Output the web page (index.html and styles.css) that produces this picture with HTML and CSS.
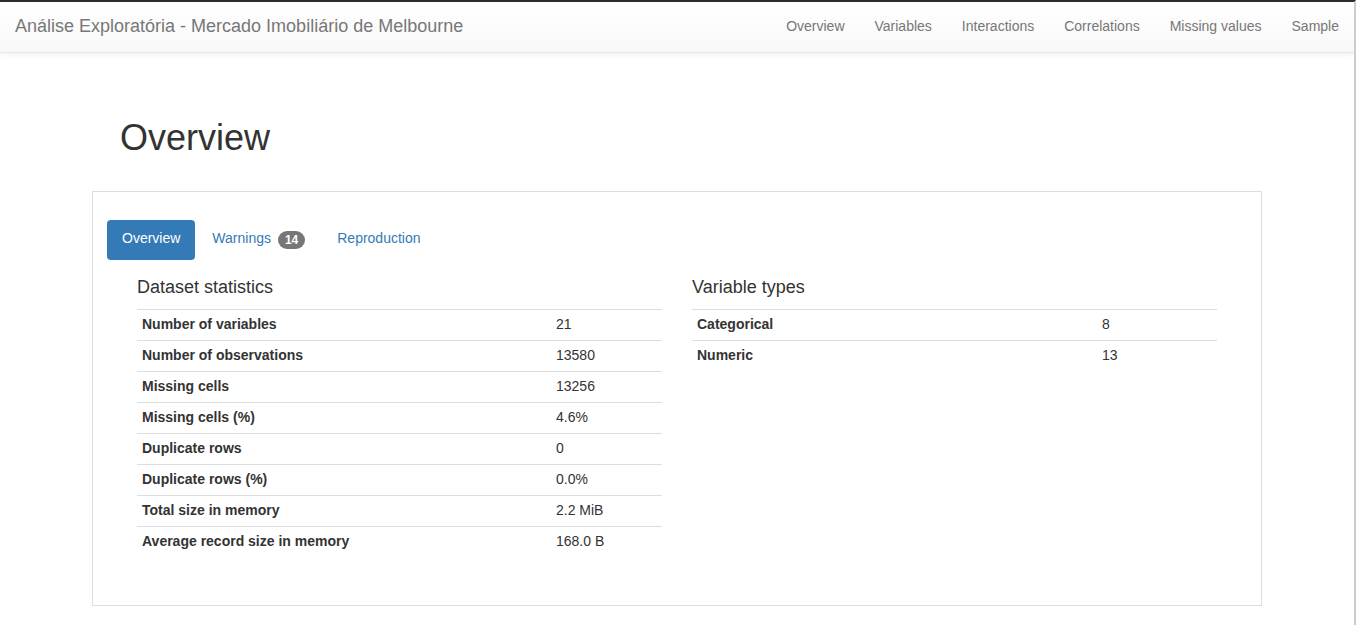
FILE: index.html
```html
<!DOCTYPE html>
<html lang="pt">
<head>
<meta charset="utf-8">
<title>Análise Exploratória - Mercado Imobiliário de Melbourne</title>
<link rel="stylesheet" href="styles.css">
</head>
<body>
<nav class="navbar">
  <a class="brand" href="#">Análise Exploratória - Mercado Imobiliário de Melbourne</a>
  <ul class="nav-links">
    <li><a href="#">Overview</a></li>
    <li><a href="#">Variables</a></li>
    <li><a href="#">Interactions</a></li>
    <li><a href="#">Correlations</a></li>
    <li><a href="#">Missing values</a></li>
    <li><a href="#">Sample</a></li>
  </ul>
</nav>
<main class="container">
  <h1 class="page-title">Overview</h1>
  <section class="panel">
    <ul class="pills">
      <li class="active"><a href="#">Overview</a></li>
      <li><a href="#">Warnings <span class="badge">14</span></a></li>
      <li><a href="#">Reproduction</a></li>
    </ul>
    <div class="tab-content">
      <div class="col">
        <p class="heading">Dataset statistics</p>
        <table class="stats stats-left">
          <tbody>
            <tr><th>Number of variables</th><td>21</td></tr>
            <tr><th>Number of observations</th><td>13580</td></tr>
            <tr><th>Missing cells</th><td>13256</td></tr>
            <tr><th>Missing cells (%)</th><td>4.6%</td></tr>
            <tr><th>Duplicate rows</th><td>0</td></tr>
            <tr><th>Duplicate rows (%)</th><td>0.0%</td></tr>
            <tr><th>Total size in memory</th><td>2.2 MiB</td></tr>
            <tr><th>Average record size in memory</th><td>168.0 B</td></tr>
          </tbody>
        </table>
      </div>
      <div class="col">
        <p class="heading">Variable types</p>
        <table class="stats stats-right">
          <tbody>
            <tr><th>Categorical</th><td>8</td></tr>
            <tr><th>Numeric</th><td>13</td></tr>
          </tbody>
        </table>
      </div>
    </div>
  </section>
</main>
</body>
</html>
```
FILE: styles.css
```css
* { box-sizing: border-box; }

html { background: #fff; }

body {
  margin: 0;
  min-height: 100vh;
  font-family: "Liberation Sans", Arial, sans-serif;
  font-size: 14px;
  line-height: 20px;
  color: #333;
  background: #fff;
  border-top: 2px solid #2d2d2d;
  border-right: 2px solid #cfcbc7;
}

a { text-decoration: none; }

.navbar {
  display: flex;
  justify-content: space-between;
  align-items: stretch;
  height: 51px;
  background-image: linear-gradient(to bottom, #fff 0, #f8f8f8 100%);
  border-bottom: 1px solid #e7e7e7;
  box-shadow: 0 1px 5px rgba(0, 0, 0, 0.075);
}

.brand {
  display: block;
  padding: 14px 15px 16px;
  font-size: 18px;
  line-height: 20px;
  color: #777;
}

.nav-links {
  display: flex;
  list-style: none;
  margin: 0;
  padding: 0;
}

.nav-links a {
  display: block;
  padding: 14px 15px 16px;
  color: #777;
  line-height: 20px;
}

.container {
  width: 1170px;
  margin: 0 auto;
}

.page-title {
  margin: 65px 0 33px;
  padding-left: 28px;
  font-size: 36px;
  font-weight: 500;
  line-height: 40px;
  color: #333;
}

.panel {
  border: 1px solid #ddd;
  padding: 28px 14px 28px;
}

.pills {
  display: flex;
  list-style: none;
  margin: 0;
  padding: 0;
  gap: 2px;
}

.pills a {
  display: block;
  padding: 8px 15px 12px;
  line-height: 20px;
  color: #337ab7;
  border-radius: 4px;
}

.pills .active a {
  background: #337ab7;
  color: #fff;
}

.badge {
  display: inline-block;
  min-width: 10px;
  margin-left: 3px;
  padding: 3px 7px;
  font-size: 12px;
  font-weight: bold;
  line-height: 1;
  color: #fff;
  text-align: center;
  white-space: nowrap;
  vertical-align: middle;
  background: #777;
  border-radius: 10px;
  position: relative;
  top: 1px;
}

.tab-content {
  display: grid;
  grid-template-columns: 1fr 1fr;
  padding: 0 15px;
}

.col {
  padding: 0 15px;
}

.heading {
  margin: 17px 0 12px;
  font-size: 18px;
  line-height: 20px;
  font-weight: 500;
  color: #333;
}

.stats {
  width: 100%;
  border-collapse: collapse;
  margin-bottom: 20px;
}

.stats th,
.stats td {
  padding: 4px 5px 6px;
  border-top: 1px solid #ddd;
  text-align: left;
  vertical-align: top;
  line-height: 20px;
}

.stats th { font-weight: bold; }

.stats-left th { width: 414px; }
.stats-right th { width: 405px; }
```
